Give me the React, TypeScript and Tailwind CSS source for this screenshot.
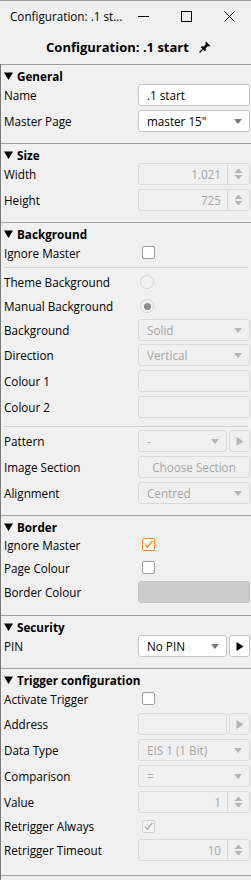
import React from "react";

const Caret = ({ disabled }: { disabled?: boolean }) => (
  <svg width="8" height="5" viewBox="0 0 8 5" className="shrink-0">
    <path d="M0 0 L8 0 L4 5 Z" fill={disabled ? "#b4b4b4" : "#7a7a7a"} />
  </svg>
);

const SpinArrows = () => (
  <svg width="9" height="12" viewBox="0 0 9 12">
    <path d="M0.5 5 L8.5 5 L4.5 0.5 Z" fill="#b4b4b4" />
    <path d="M0.5 7 L8.5 7 L4.5 11.5 Z" fill="#b4b4b4" />
  </svg>
);

const Row = ({ label, h, children }: { label: string; h: string; children?: React.ReactNode }) => (
  <div className={`flex items-center ${h}`}>
    <div className="w-[137px] pl-[3px] text-black whitespace-nowrap">{label}</div>
    <div className="w-[112px] flex items-center">{children}</div>
  </div>
);

const TextBox = ({ value, disabled, fill }: { value?: string; disabled?: boolean; fill?: boolean }) => (
  <div
    className={`w-full h-[22px] rounded-[3px] border flex items-center px-[8px] ${
      fill
        ? "bg-[#cccccc] border-[#c4c4c4]"
        : disabled
        ? "bg-[#f0f0f0] border-[#d9d9d9] text-[#a6a6a6]"
        : "bg-white border-[#c6c6c6] text-black"
    }`}
  >
    {value}
  </div>
);

const Select = ({ value, disabled, w }: { value: string; disabled?: boolean; w: string }) => (
  <div
    className={`${w} h-[22px] rounded-[3px] border flex items-center justify-between pl-[8px] pr-[7px] ${
      disabled ? "bg-[#f0f0f0] border-[#d9d9d9] text-[#a6a6a6]" : "bg-white border-[#c6c6c6] text-black"
    }`}
  >
    <span>{value}</span>
    <Caret disabled={disabled} />
  </div>
);

const Spin = ({ value }: { value: string }) => (
  <div className="w-full h-[22px] rounded-[3px] border border-[#d9d9d9] bg-[#f0f0f0] flex items-center">
    <div className="w-[89px] h-full flex items-center justify-end pr-[6px] text-[#a6a6a6] border-r border-[#d9d9d9]">
      {value}
    </div>
    <div className="flex-1 flex items-center justify-center">
      <SpinArrows />
    </div>
  </div>
);

const PlayBtn = ({ disabled }: { disabled?: boolean }) => (
  <div
    className={`ml-[2px] w-[21px] shrink-0 h-[22px] rounded-[3px] border flex items-center justify-center ${
      disabled ? "bg-[#f0f0f0] border-[#d9d9d9]" : "bg-white border-[#c6c6c6]"
    }`}
  >
    <svg width="8" height="9" viewBox="0 0 8 9">
      <path d="M0.5 0 L7.5 4.5 L0.5 9 Z" fill={disabled ? "#b4b4b4" : "#000"} />
    </svg>
  </div>
);

const Check = ({ checked, variant }: { checked?: boolean; variant?: "orange" | "disabled" }) => {
  const border =
    variant === "orange" ? "border-[#f0882a]" : variant === "disabled" ? "border-[#cfcfcf]" : "border-[#9e9e9e]";
  const bg = variant === "disabled" ? "bg-[#f4f4f4]" : "bg-white";
  const stroke = variant === "orange" ? "#f0882a" : "#a8a8a8";
  return (
    <div className={`ml-[4px] w-[13px] h-[13px] rounded-[2px] border ${border} ${bg} flex items-center justify-center`}>
      {checked && (
        <svg width="11" height="11" viewBox="0 0 11 11">
          <path d="M1.8 5.6 L4.4 8.2 L9.4 1.8" fill="none" stroke={stroke} strokeWidth="1.3" />
        </svg>
      )}
    </div>
  );
};

const Radio = ({ selected }: { selected?: boolean }) => (
  <div className="ml-[2px] w-[14px] h-[14px] rounded-full border border-[#d2d2d2] bg-[#f3f3f3] flex items-center justify-center">
    {selected && <div className="w-[7px] h-[7px] rounded-full bg-[#8a8a8a]" />}
  </div>
);

const Header = ({ title }: { title: string }) => (
  <div className="h-[17px] pt-[4px] flex items-center pl-[3px] font-bold text-black">
    <svg width="9" height="8" viewBox="0 0 9 8" className="mr-[4px]">
      <path d="M0 0.5 L9 0.5 L4.5 8 Z" fill="#000" />
    </svg>
    <span>{title}</span>
  </div>
);

const Sep = () => <div className="h-[1px] bg-[#a0a0a0]" />;
const ThinSep = ({ cls }: { cls: string }) => <div className={`h-[1px] bg-[#cfcfcf] mx-[3px] ${cls}`} />;

export default function App() {
  return (
    <div className="w-[251px] h-[880px] bg-[#f0f0f0] overflow-hidden text-[11.7px] leading-[16px] font-['Segoe_UI','Open_Sans',sans-serif] text-black border-t border-[#9a9a9a]">
      {/* title bar */}
      <div className="h-[30px] flex items-center">
        <div className="pl-[10px] w-[122px] whitespace-nowrap">Configuration: .1 st...</div>
        <div className="w-[44px] flex justify-center">
          <div className="w-[11px] h-[1px] bg-black" />
        </div>
        <div className="w-[44px] flex justify-center">
          <div className="w-[11px] h-[11px] border border-black" />
        </div>
        <div className="w-[44px] flex justify-center">
          <svg width="11" height="11" viewBox="0 0 11 11">
            <path d="M0.5 0.5 L10.5 10.5 M10.5 0.5 L0.5 10.5" stroke="#000" strokeWidth="1" />
          </svg>
        </div>
      </div>
      {/* heading */}
      <div className="h-[33px] flex items-center justify-center pl-[6px] pb-[2px]">
        <span className="font-bold text-[13px]">Configuration: .1 start</span>
        <svg width="12" height="12" viewBox="0 0 12 12" className="ml-[10px]">
          <path d="M7 0.5 L11.5 5 L10.2 5.6 L8.6 5.2 L6.6 7.2 L6.8 9.2 L5.8 10.2 L1.8 6.2 L2.8 5.2 L4.8 5.4 L6.8 3.4 L6.4 1.8 Z" fill="#000" />
          <path d="M3.6 8.4 L0.5 11.5" stroke="#000" strokeWidth="1.3" />
        </svg>
      </div>

      <div className="border-l border-[#7a7a7a] h-full">
        <Sep />
        {/* General */}
        <Header title="General" />
        <Row label="Name" h="h-[26px]">
          <TextBox value=".1 start" />
        </Row>
        <Row label="Master Page" h="h-[26px]">
          <Select value={'master 15"'} w="w-full" />
        </Row>
        <div className="h-[9px]" />
        <Sep />
        {/* Size */}
        <Header title="Size" />
        <Row label="Width" h="h-[26px]">
          <Spin value="1.021" />
        </Row>
        <Row label="Height" h="h-[26px]">
          <Spin value="725" />
        </Row>
        <div className="h-[9px]" />
        <Sep />
        {/* Background */}
        <Header title="Background" />
        <Row label="Ignore Master" h="h-[25px]">
          <Check />
        </Row>
        <ThinSep cls="mt-[2px] mb-[2px]" />
        <Row label="Theme Background" h="h-[24px]">
          <Radio />
        </Row>
        <Row label="Manual Background" h="h-[24px]">
          <Radio selected />
        </Row>
        <Row label="Background" h="h-[24px]">
          <Select value="Solid" disabled w="w-full" />
        </Row>
        <Row label="Direction" h="h-[26px]">
          <Select value="Vertical" disabled w="w-full" />
        </Row>
        <Row label="Colour 1" h="h-[26px]">
          <TextBox disabled />
        </Row>
        <Row label="Colour 2" h="h-[26px]">
          <TextBox disabled />
        </Row>
        <ThinSep cls="mt-[6px] mb-[1px]" />
        <Row label="Pattern" h="h-[26px]">
          <Select value="-" disabled w="w-[89px]" />
          <PlayBtn disabled />
        </Row>
        <Row label="Image Section" h="h-[26px]">
          <div className="w-full h-[22px] rounded-[3px] border border-[#d9d9d9] bg-[#f0f0f0] flex items-center justify-center text-[#a6a6a6]">
            Choose Section
          </div>
        </Row>
        <Row label="Alignment" h="h-[26px]">
          <Select value="Centred" disabled w="w-full" />
        </Row>
        <div className="h-[9px]" />
        <Sep />
        {/* Border */}
        <Header title="Border" />
        <Row label="Ignore Master" h="h-[23px]">
          <Check checked variant="orange" />
        </Row>
        <Row label="Page Colour" h="h-[23px]">
          <Check />
        </Row>
        <Row label="Border Colour" h="h-[26px]">
          <TextBox fill />
        </Row>
        <div className="h-[10px]" />
        <Sep />
        {/* Security */}
        <Header title="Security" />
        <Row label="PIN" h="h-[26px]">
          <Select value="No PIN" w="w-[89px]" />
          <PlayBtn />
        </Row>
        <div className="h-[9px]" />
        <Sep />
        {/* Trigger */}
        <Header title="Trigger configuration" />
        <Row label="Activate Trigger" h="h-[25px]">
          <Check />
        </Row>
        <Row label="Address" h="h-[26px]">
          <TextBox disabled />
          <PlayBtn disabled />
        </Row>
        <Row label="Data Type" h="h-[26px]">
          <Select value="EIS 1 (1 Bit)" disabled w="w-full" />
        </Row>
        <Row label="Comparison" h="h-[26px]">
          <Select value="=" disabled w="w-full" />
        </Row>
        <Row label="Value" h="h-[26px]">
          <Spin value="1" />
        </Row>
        <Row label="Retrigger Always" h="h-[22px]">
          <Check checked variant="disabled" />
        </Row>
        <Row label="Retrigger Timeout" h="h-[26px]">
          <Spin value="10" />
        </Row>
        <div className="h-[12px]" />
        <Sep />
      </div>
    </div>
  );
}
